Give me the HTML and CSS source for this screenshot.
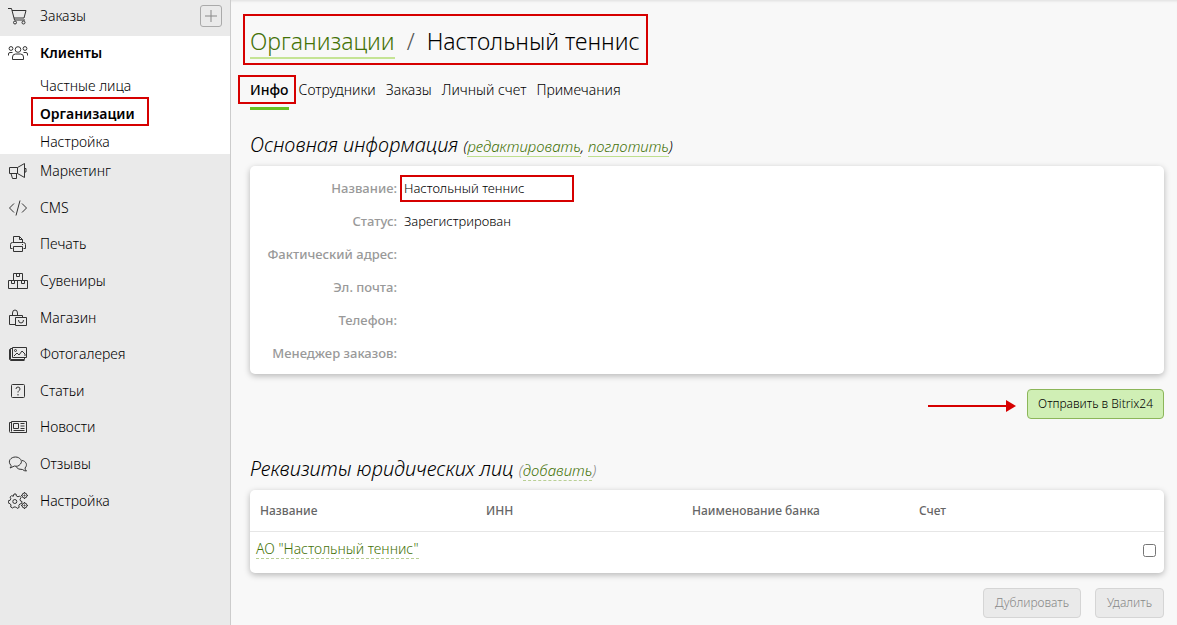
FILE: index.html
```html
<!DOCTYPE html>
<html lang="ru">
<head>
<meta charset="utf-8">
<title>Настольный теннис</title>
<link rel="stylesheet" href="styles.css">
</head>
<body>
<div class="layout">
  <aside class="sidebar">
    <div class="nav-top">
      <a class="nav-item" href="#orders">
        <svg class="icon" viewBox="0 0 20 20"><path d="M0 2.500h3.500L6.500 14h10.500M4 4.500h14l-2 7.500H6"/><circle cx="7" cy="16.500" r="1.500"/><circle cx="15.500" cy="16.500" r="1.500"/></svg>
        Заказы</a>
      <button class="add" type="button" aria-label="Добавить заказ"><svg viewBox="0 0 20 20"><path d="M10 4v12M4 10h12"/></svg></button>
    </div>
    <div class="nav-open">
      <a class="nav-item current" href="#clients">
        <svg class="icon" viewBox="0 0 20 20"><circle cx="10" cy="6.500" r="2.800"/><circle cx="3" cy="5.500" r="1.900"/><circle cx="17" cy="5.500" r="1.900"/><path d="M4.500 16.500V14q0-3 3-3h5q3 0 3 3v2.500zM.5 12.500V11Q.5 9.500 2 9.500h2.500M19.500 12.500V11q0-1.500-1.500-1.500h-2.500"/></svg>
        Клиенты</a>
      <a class="sub-item" href="#private">Частные лица</a>
      <a class="sub-item current marked" href="#organizations">Организации</a>
      <a class="sub-item" href="#client-settings">Настройка</a>
    </div>
    <nav class="nav-list">
      <a class="nav-item" href="#marketing"><svg class="icon" viewBox="0 0 20 20"><path d="M1.500 6.500h8v6h-8zM9.500 6.500l7-4v14l-7-4M16.500 7.500h1.500v3.500h-1.500M3 12.500l1.500 5h4v-5"/></svg>Маркетинг</a>
      <a class="nav-item" href="#cms"><svg class="icon" viewBox="0 0 20 20"><path d="M6 5.500 1.500 10 6 14.500M14 5.500l4.500 4.500-4.500 4.500M12 2.500 8 17.500"/></svg>CMS</a>
      <a class="nav-item" href="#print"><svg class="icon" viewBox="0 0 20 20"><path d="M5.500 8.500v-6h6l3 3v3M11.500 2.500v3h3M4.500 14.500h-2v-4q0-2 2-2h11q2 0 2 2v4h-2M5.500 12.500h9v5h-9zM14 10.500h1"/></svg>Печать</a>
      <a class="nav-item" href="#souvenirs"><svg class="icon" viewBox="0 0 20 20"><path d="M5.500 9.500v-7h9v7M.5 9.500h19v8H.5zM9.500 9.500v8M8.500 2.500v3h3v-3M3.500 9.500v3h3v-3M13.500 9.500v3h3v-3"/></svg>Сувениры</a>
      <a class="nav-item" href="#shop"><svg class="icon" viewBox="0 0 20 20"><path d="M7 16.500H1.500v-9h13v2M4.500 7.500V5q0-3 2.500-3t2.500 3v2.500M7.500 9.500h11v8h-11zM10.500 12q0 3 2.500 3t2.500-3"/></svg>Магазин</a>
      <a class="nav-item" href="#gallery"><svg class="icon" viewBox="0 0 20 20"><path d="M4.500 3.500h14v10h-14zM4.500 4.500h-2v11h14v-2M2.500 5.500h-1v10l1 1h14M6 12l3-3 2 2 3-4 3 3v2"/><circle cx="7.500" cy="6.500" r="1"/></svg>Фотогалерея</a>
      <a class="nav-item" href="#articles"><svg class="icon" viewBox="0 0 20 20"><rect x="3.500" y="3.500" width="13" height="13" rx="1"/><path d="M8 8q0-2 2-2t2 2q0 1-1 1.500t-1 2M10 13v1.500"/></svg>Статьи</a>
      <a class="nav-item" href="#news"><svg class="icon" viewBox="0 0 20 20"><path d="M3.500 4.500h15v11h-16q-1 0-1-1v-9h2M3.500 4.500v10M5.500 6.500h5v5h-5zM12.500 6.500h4M12.500 9h4M12.500 11.500h4M5.500 13.500h11"/></svg>Новости</a>
      <a class="nav-item" href="#reviews"><svg class="icon" viewBox="0 0 20 20"><path d="M3 11.500C-1 7 3 3 7.500 3S15 7 12.500 10c-2 2.500-4 2.500-6 2L2 14q1.500-1.500 1-2.500M14 6.500c4 .5 6 4.500 3 7.500q0 2 1.500 3-2.500 0-4-1.500-5 .5-6.500-3"/></svg>Отзывы</a>
      <a class="nav-item" href="#settings"><svg class="icon" viewBox="0 0 20 20"><path d="m6 3 2 0 .4 2 1.600.8L11.700 5l1.300 1.600-1 1.700.5 1.700 1.500.5-.3 2-1.900.5-1 1.500.4 1.900-2 1-1.400-1.400H6L4.500 17 2.700 16l.3-2-1-1.400-1.700-.6V9.800l1.800-.5.7-1.600-.7-1.600L3.600 4.600l1.700.7z"/><circle cx="6.800" cy="10.500" r="2"/><circle cx="16.500" cy="4.500" r="2.500"/><circle cx="16.500" cy="4.500" r=".6"/><circle cx="16.500" cy="14.500" r="2.500"/><circle cx="16.500" cy="14.500" r=".6"/><path d="M16.500 1v1M16.500 7v1M13 4.500h1M19 4.500h1M16.500 11v1M16.500 17v1M13 14.500h1M19 14.500h1"/></svg>Настройка</a>
    </nav>
  </aside>
  <main class="content">
    <h1 class="title marked"><a class="link" href="#organizations">Организации</a><span class="slash">/</span>Настольный теннис</h1>
    <nav class="tabs">
      <a class="tab active marked" href="#info">Инфо</a>
      <a class="tab" href="#staff">Сотрудники</a>
      <a class="tab" href="#org-orders">Заказы</a>
      <a class="tab" href="#account">Личный счет</a>
      <a class="tab" href="#notes">Примечания</a>
    </nav>

    <h2 class="heading">Основная информация <small>(<a class="link" href="#edit">редактировать</a>, <a class="link" href="#merge">поглотить</a>)</small></h2>
    <dl class="card info">
      <dt>Название:</dt><dd><span class="value marked">Настольный теннис</span></dd>
      <dt>Статус:</dt><dd>Зарегистрирован</dd>
      <dt>Фактический адрес:</dt><dd></dd>
      <dt>Эл. почта:</dt><dd></dd>
      <dt>Телефон:</dt><dd></dd>
      <dt>Менеджер заказов:</dt><dd></dd>
    </dl>
    <div class="actions send">
      <svg class="arrow" viewBox="0 0 88 12"><path d="M0 6h80" stroke="#d60000" stroke-width="2"/><path d="M78 0l10 6-10 6z" fill="#d60000"/></svg>
      <button class="btn primary" type="button">Отправить в Bitrix24</button>
    </div>

    <h2 class="heading">Реквизиты юридических лиц <small class="muted">(<a class="link dashed" href="#add">добавить</a>)</small></h2>
    <table class="card legal">
      <thead><tr><th class="c-name">Название</th><th class="c-inn">ИНН</th><th class="c-bank">Наименование банка</th><th>Счет</th><th class="c-check"></th></tr></thead>
      <tbody><tr><td><a class="link dashed" href="#ao">АО "Настольный теннис"</a></td><td></td><td></td><td></td><td><input type="checkbox" aria-label="Выбрать АО &quot;Настольный теннис&quot;"></td></tr></tbody>
    </table>
    <div class="actions">
      <button class="btn" type="button" disabled>Дублировать</button>
      <button class="btn" type="button" disabled>Удалить</button>
    </div>
  </main>
</div>
</body>
</html>
```
FILE: styles.css
```css
* { box-sizing: border-box; }
body {
  margin: 0;
  background: #f8f8f8;
  color: #000;
  font: 300 14px/20px "Noto Sans", "Open Sans", sans-serif;
}
a { color: inherit; text-decoration: none; }

.layout { display: flex; min-height: 100vh; box-shadow: inset 0 3px 3px -2px #ddd; }
.sidebar { flex: 0 0 231px; background: #eaeaea; border-right: 1px solid #ccc; }
.nav-top { display: flex; align-items: center; justify-content: space-between; height: 36px; padding: 0 8px 4px 0; }
.nav-item { display: flex; align-items: center; gap: 12px; padding-left: 8px; }
.icon { width: 20px; height: 20px; fill: none; stroke: #333; stroke-width: 1; }
.add { width: 22px; height: 22px; padding: 0; background: none; border: 1px solid #aaa; border-radius: 3px; }
.add svg { display: block; width: 20px; height: 20px; stroke: #888; fill: none; }
.nav-open { padding-top: 7px; background: #fff; }
.nav-open .nav-item { margin-bottom: 9px; }
.sub-item { display: block; width: 118px; margin-left: 31px; padding: 4px 9px; }
.sub-item:last-child { padding-bottom: 2px; }
.current { font-weight: 600; }
.nav-list { display: grid; grid-auto-rows: 1fr; min-height: 366px; margin-top: -1px; }

.marked { position: relative; }
.marked::after { content: ""; position: absolute; border: 2px solid #d60000; pointer-events: none; }
.sub-item.marked::after { inset: -3px 0 2px; }
.title.marked::after { inset: -6px -8px -6px -7px; }
.tab.marked::after { inset: -5px -7px 3px -12px; }
.value.marked::after { inset: -4px -50px -5px -4px; }

.content { flex: 1; padding: 20px 13px 7px 19px; }
.link { color: #447207; border-bottom: 1px solid #bfdf8f; }
.dashed { border-bottom: 1px dashed #b9cf94; }
.title { width: fit-content; margin: 0; padding-top: 4px; font-size: 23px; line-height: 35px; font-weight: 300; }
.title .link { display: inline-block; line-height: 32px; border-bottom: 2px solid #c5e495; }
.slash { margin: 0 12px; color: #555; }
.tabs { display: flex; gap: 10px; margin-top: 21px; }
.tab { padding-bottom: 7px; }
.tab.active { font-weight: 500; border-bottom: 3px solid #67c023; }
.heading { margin: 20px 0 5px; font-size: 20px; line-height: 29px; font-weight: 300; font-style: italic; }
.heading small { font-size: 15px; }
.muted { color: #888; }
.card { margin: 0; background: #fff; border-radius: 5px; box-shadow: 0 2px 6px #0004; }
.info { display: grid; grid-template-columns: 147px 1fr; column-gap: 7px; row-gap: 13px; padding: 12px 0 11px; font-size: 13px; }
.info dt { height: 20px; color: #999; font-weight: 500; text-align: right; }
.info dd { margin: 0; color: #000; }
.actions { display: flex; align-items: center; justify-content: flex-end; gap: 14px; margin-top: 15px; }
.arrow { width: 88px; height: 12px; margin: 3px -3px 0 0; }
.btn { height: 30px; padding: 0 11px; font: 300 12px/20px "Noto Sans", "Open Sans", sans-serif; color: #888; background: #eaeaea; border: 1px solid #d5d5d5; border-radius: 4px; }
.primary { padding: 0 10px; color: #000; background: #d0efb5; border-color: #8cb65a; }
.send + .heading { margin-top: 35px; }
.legal { width: 100%; border-spacing: 0; table-layout: fixed; }
.legal th { height: 42px; padding: 0 10px; border-bottom: 1px solid #e6e6e6; color: #666; font-size: 12px; font-weight: 500; text-align: left; }
.legal td { height: 41px; padding: 0 6px 8px; vertical-align: middle; }
.legal .c-name { width: 226px; }
.legal .c-inn { width: 206px; }
.legal .c-bank { width: 227px; }
.legal .c-check { width: 27px; padding: 0; }
.legal input { display: block; width: 13px; height: 13px; margin: 4px 0 0; }
```
